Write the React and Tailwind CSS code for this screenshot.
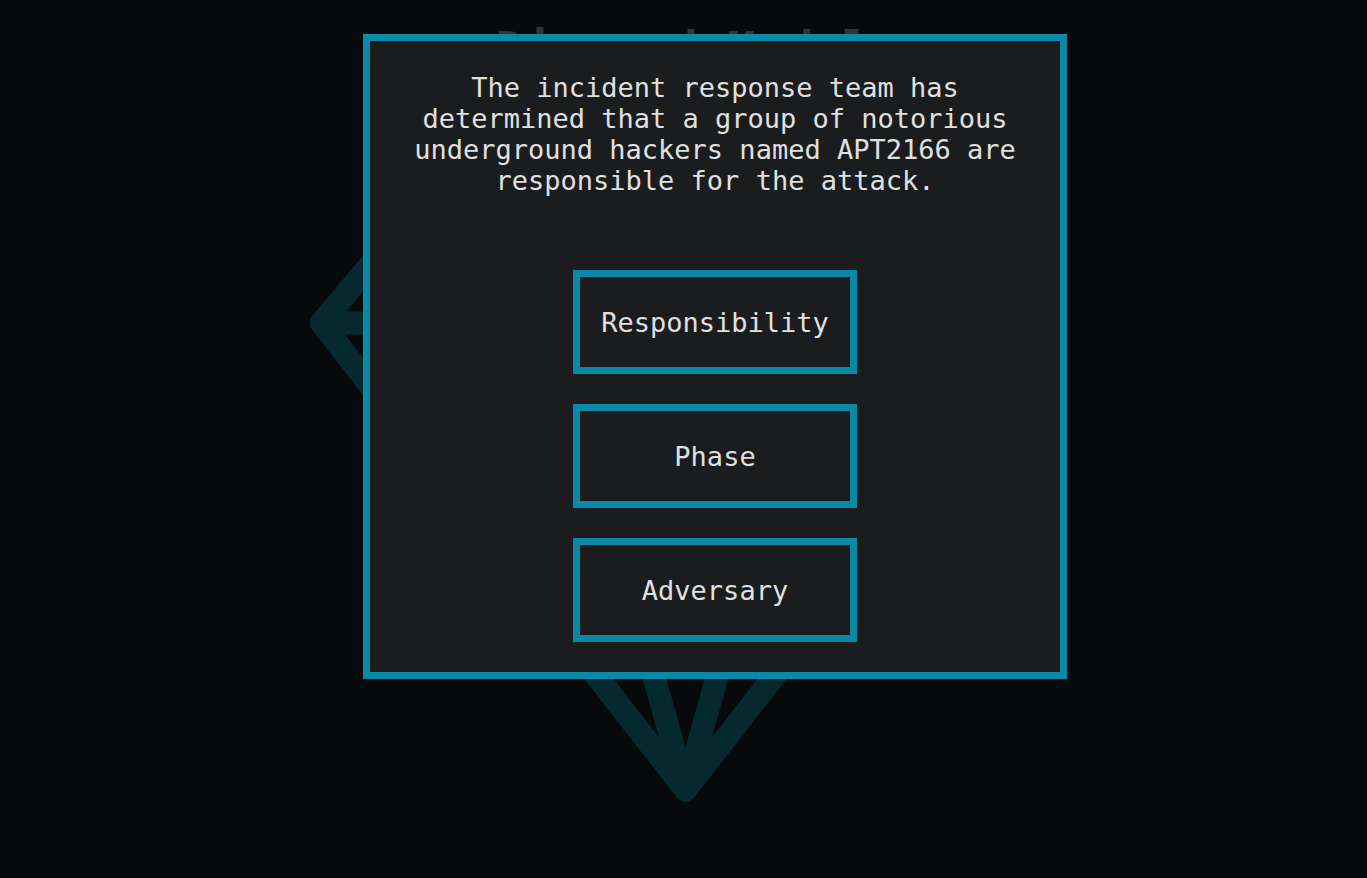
import React from "react";

const mono = "font-['DejaVu_Sans_Mono',monospace]";

function Gem() {
  return (
    <svg
      width="760"
      height="740"
      viewBox="-381.5 0 760 740"
      className="block"
      fill="none"
      stroke="#062930"
      strokeWidth="23"
      strokeLinejoin="round"
      strokeLinecap="round"
    >
      <path d="M-183 34 H183 L364 250 L0 717 L-364 250 Z" />
      <path d="M-364 250 H364" />
      <path d="M-36 34 L-130 250 L0 717 L130 250 L36 34" />
    </svg>
  );
}

function Choice({ label }) {
  return (
    <button
      className={`${mono} w-[284px] h-[104px] border-[7px] border-[#0b8aa8] bg-[#1b1c1e] text-[27px] leading-[31px] text-[#e0e0e0] flex items-center justify-center`}
    >
      {label}
    </button>
  );
}

export default function App() {
  return (
    <div className="relative min-h-screen w-full bg-[#08090b] overflow-hidden">
      <div className="flex flex-col items-center pt-[25px]">
        <h1 className={`${mono} text-[48px] leading-none font-bold text-[#333436]`}>
          Diamond Model
        </h1>
        <Gem />
      </div>

      <div className="absolute left-[363px] top-[34px] w-[704px] border-[7px] border-[#0b8aa8] bg-[#1b1c1e] px-[40px] pt-[31px] pb-[30px] flex flex-col items-center">
        <p className={`${mono} text-center text-[27px] leading-[31px] text-[#e0e0e0]`}>
          The incident response team has determined that a group of notorious
          underground hackers named APT2166 are responsible for the attack.
        </p>
        <div className="mt-[74px] flex flex-col items-center gap-[30px]">
          <Choice label="Responsibility" />
          <Choice label="Phase" />
          <Choice label="Adversary" />
        </div>
      </div>
    </div>
  );
}
